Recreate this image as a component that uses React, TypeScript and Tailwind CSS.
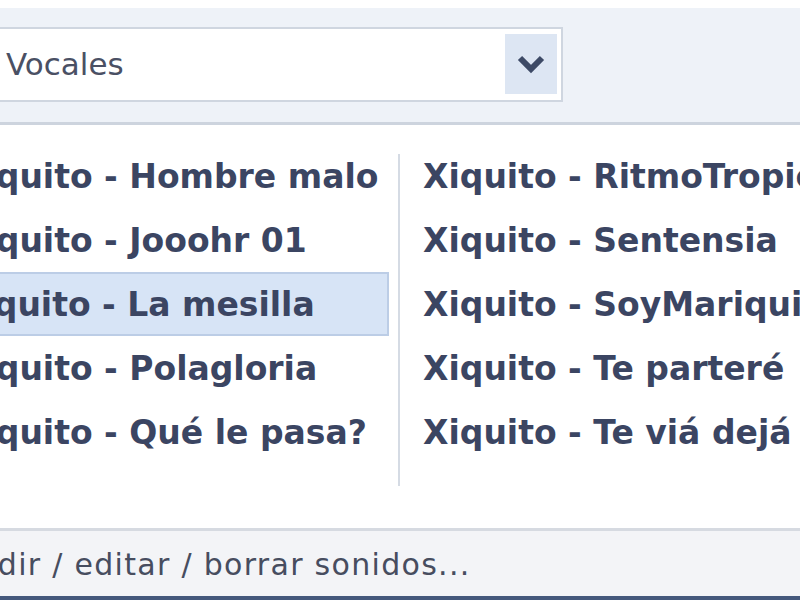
const leftItems = [
  "Xiquito - Hombre malo",
  "Xiquito - Jooohr 01",
  "Xiquito - La mesilla",
  "Xiquito - Polagloria",
  "Xiquito - Qué le pasa?",
];

const rightItems = [
  "Xiquito - RitmoTropical",
  "Xiquito - Sentensia",
  "Xiquito - SoyMariquita",
  "Xiquito - Te parteré",
  "Xiquito - Te viá dejá",
];

const font = "font-['DejaVu_Sans',Tahoma,sans-serif]";

const App = () => {
  return (
    <div
      className={`w-[800px] h-[600px] overflow-hidden bg-white flex flex-col ${font} text-[#3b4562]`}
    >
      <div className="h-[8px] bg-white shrink-0" />

      {/* category selector */}
      <div className="h-[117px] shrink-0 bg-[#eef2f8] border-b-[3px] border-[#cdd4de] flex items-center">
        <div className="ml-[-20px] mt-[-2px] w-[583px] h-[75px] bg-white border-2 border-[#cfd6e0] flex items-center">
          <span className="flex-1 pl-[24px] text-[31px] leading-none text-[#4a5064]">
            Vocales
          </span>
          <div className="w-[52px] h-[60px] mr-[4px] bg-[#dde6f3] flex items-center justify-center">
            <svg width="30" height="20" viewBox="0 0 30 20">
              <path
                d="M4 4 L15 15 L26 4"
                fill="none"
                stroke="#3d4a66"
                strokeWidth="6"
                strokeLinejoin="miter"
              />
            </svg>
          </div>
        </div>
      </div>

      {/* sound list */}
      <div className="flex-1 flex pt-[19px] min-w-0">
        <div className="w-[389px] shrink-0 flex flex-col overflow-hidden">
          {leftItems.map((item, i) => (
            <div
              key={item}
              className={
                i === 2
                  ? "h-[64px] flex items-center bg-[#d7e4f6] border-2 border-l-0 border-[#bccde6]"
                  : "h-[64px] flex items-center border-2 border-transparent"
              }
            >
              <span className="ml-[-43px] whitespace-nowrap text-[33px] font-bold leading-none">
                {item}
              </span>
            </div>
          ))}
        </div>
        <div className="shrink-0 ml-[9px] mt-[10px] h-[332px] w-[2px] bg-[#d5dbe4]" />
        <div className="shrink-0 ml-[21px] flex flex-col">
          {rightItems.map((item) => (
            <div
              key={item}
              className="h-[64px] flex items-center border-2 border-transparent"
            >
              <span className="whitespace-nowrap text-[33px] font-bold leading-none">
                {item}
              </span>
            </div>
          ))}
        </div>
      </div>

      {/* footer link */}
      <div className="h-[72px] shrink-0 bg-[#f3f4f7] border-t-[3px] border-[#d6dae1] border-b-[4px] border-b-[#44587c] flex items-center">
        <span className="ml-[-64px] mt-[3px] whitespace-nowrap text-[30px] tracking-[1.3px] leading-none text-[#474d5f]">
          Añadir / editar / borrar sonidos...
        </span>
      </div>
    </div>
  );
};

export default App;
